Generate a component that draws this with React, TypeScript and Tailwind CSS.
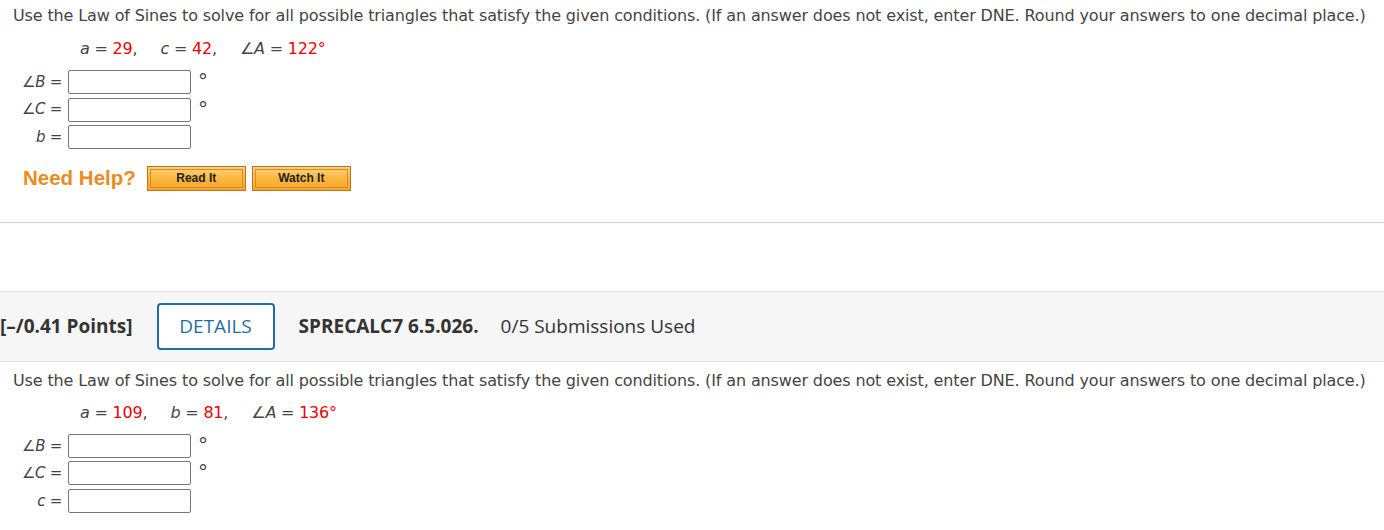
import React from "react";

type Row = { label: React.ReactNode; degree?: boolean };

const body = "font-['DejaVu_Sans',Verdana,sans-serif]";

function AngleLabel({ letter }: { letter: string }) {
  return (
    <span>
      ∠<i>{letter}</i>
    </span>
  );
}

function AnswerRows({ rows }: { rows: Row[] }) {
  return (
    <div className="flex flex-col gap-[3.5px] pl-[13px]">
      {rows.map((row, i) => (
        <div key={i} className="flex h-[24px] items-center">
          <span className="w-[55px] pr-[6px] text-right text-[15px] tracking-[-0.3px] text-[#444]">
            {row.label} =
          </span>
          <span className="h-[24px] w-[123px] rounded-[2px] border border-[#767676] bg-white" />
          {row.degree && (
            <span className="ml-[7px] -translate-y-[1px] text-[20px] leading-none text-[#444]">°</span>
          )}
        </div>
      ))}
    </div>
  );
}

function Given({ items }: { items: { name: React.ReactNode; value: string }[] }) {
  return (
    <div className="flex h-[32px] items-center pl-[80px] text-[16px] tracking-[-0.2px] text-[#444]">
      {items.map((it, i) => (
        <span key={i} className={i > 0 ? "ml-[23px]" : ""}>
          {it.name} = <span className="text-[#e00]">{it.value}</span>
          {i < items.length - 1 ? "," : ""}
        </span>
      ))}
    </div>
  );
}

function HelpButton({ label }: { label: string }) {
  return (
    <span className="flex h-[25px] w-[99px] items-center justify-center border border-[#c2721c] bg-gradient-to-b from-[#ffd27a] via-[#fdb73e] to-[#f6a52a] p-[2px]">
      <span className="flex h-full w-full items-center justify-center border border-[#d58a2c] font-['Liberation_Sans',Arial,sans-serif] text-[12px] font-bold text-[#222]">
        {label}
      </span>
    </span>
  );
}

const prompt =
  "Use the Law of Sines to solve for all possible triangles that satisfy the given conditions. (If an answer does not exist, enter DNE. Round your answers to one decimal place.)";

export default function App() {
  return (
    <div className={`h-[530px] w-[1384px] overflow-hidden bg-white ${body}`}>
      <div className="pt-[6px]">
        <p className="pl-[13px] text-[16px] leading-[20px] tracking-[-0.13px] text-[#444]">{prompt}</p>
        <div className="mt-[7px]">
          <Given
            items={[
              { name: <i>a</i>, value: "29" },
              { name: <i>c</i>, value: "42" },
              { name: <AngleLabel letter="A" />, value: "122°" },
            ]}
          />
        </div>
        <div className="mt-[5px]">
          <AnswerRows
            rows={[
              { label: <AngleLabel letter="B" />, degree: true },
              { label: <AngleLabel letter="C" />, degree: true },
              { label: <i>b</i> },
            ]}
          />
        </div>
        <div className="mt-[14px] flex items-center gap-[6px] pl-[23px]">
          <span className="mr-[5px] font-['Liberation_Sans',Arial,sans-serif] text-[20.5px] font-bold text-[#ec8b1f]">
            Need Help?
          </span>
          <HelpButton label="Read It" />
          <HelpButton label="Watch It" />
        </div>
      </div>

      <div className="mt-[28px] border-t border-[#d4d4d4]" />

      <div className="mt-[68px] flex h-[71px] items-center border-y border-[#e0e0e0] bg-[#f6f6f6] font-['Open_Sans',sans-serif] text-[19px] text-[#333]">
        <span className="font-bold">[–/0.41 Points]</span>
        <span className="ml-[24px] flex h-[47px] w-[118px] items-center justify-center rounded-[4px] border-2 border-[#1f6ea0] bg-white text-[#1f6ea0]">
          DETAILS
        </span>
        <span className="ml-[24px] font-bold">SPRECALC7 6.5.026.</span>
        <span className="ml-[22px]">0/5 Submissions Used</span>
      </div>

      <div className="pt-[9px]">
        <p className="pl-[13px] text-[16px] leading-[20px] tracking-[-0.13px] text-[#444]">{prompt}</p>
        <div className="mt-[6px]">
          <Given
            items={[
              { name: <i>a</i>, value: "109" },
              { name: <i>b</i>, value: "81" },
              { name: <AngleLabel letter="A" />, value: "136°" },
            ]}
          />
        </div>
        <div className="mt-[5px]">
          <AnswerRows
            rows={[
              { label: <AngleLabel letter="B" />, degree: true },
              { label: <AngleLabel letter="C" />, degree: true },
              { label: <i>c</i> },
            ]}
          />
        </div>
      </div>
    </div>
  );
}
